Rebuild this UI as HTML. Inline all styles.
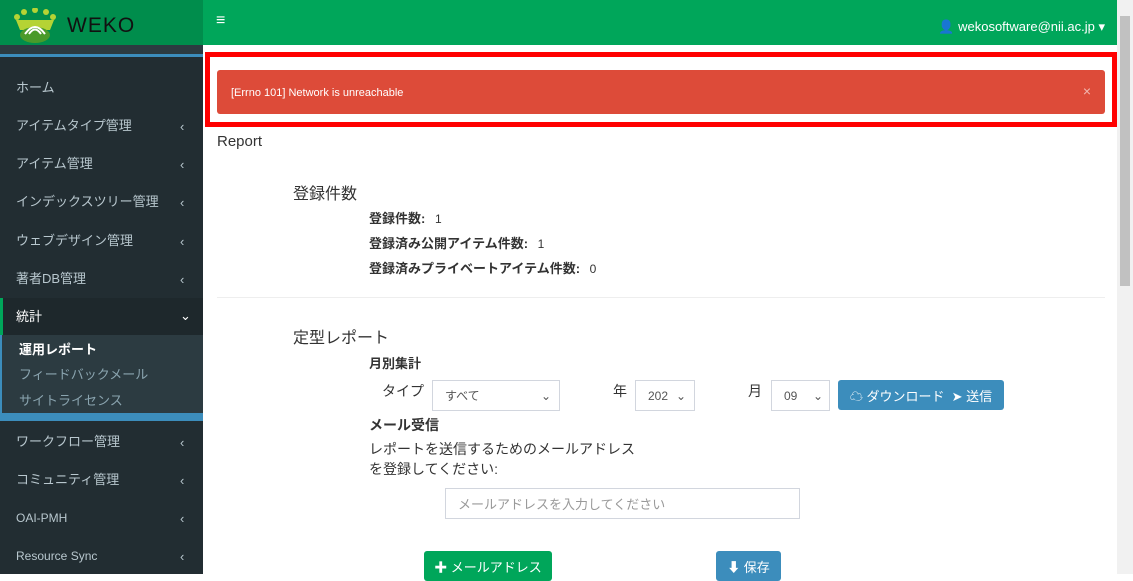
<!DOCTYPE html>
<html><head><meta charset="utf-8"><style>
*{box-sizing:border-box;margin:0;padding:0}
body{width:1133px;height:574px;overflow:hidden;font-family:"Liberation Sans","Noto Sans CJK JP",sans-serif;font-size:14px;color:#333;background:#fff;position:relative}
.abs{position:absolute}
#logo{left:0;top:0;width:203px;height:45px;background:#008d4c}
#hdr{left:203px;top:0;width:914px;height:45px;background:#00a65a;color:#fff}
#side{left:0;top:45px;width:203px;height:529px;background:#222d32}
.mi{position:absolute;left:16px;color:#b8c7ce;font-size:13px}
.ch{position:absolute;left:180px;color:#b8c7ce;font-size:13px;margin-top:4px}
.sub{position:absolute;left:19px;font-size:13px;color:#8aa4af}
.bold{font-weight:bold}
.inp{position:absolute;border:1px solid #d2d6de;background:#fff;font-size:12px;color:#555;padding-left:12px;display:flex;align-items:center}
.btn{position:absolute;background:#3c8dbc;color:#fff;border-radius:3px;font-size:13px;display:flex;align-items:center;justify-content:center}
</style></head><body>
<div id="logo" class="abs">
<svg class="abs" style="left:12px;top:8px" width="46" height="36" viewBox="0 0 46 36"><g fill="#b5d334"><circle cx="5" cy="9" r="3"/><circle cx="12" cy="4" r="3"/><circle cx="23" cy="2" r="3"/><circle cx="34" cy="4" r="3"/><circle cx="41" cy="9" r="3"/><path d="M4 12 L42 12 L38 22 L8 22Z"/></g><ellipse cx="23" cy="27" rx="15" ry="8" fill="#4a9a2a"/><path d="M13 26 Q23 12 33 26" stroke="#fff" stroke-width="2" fill="none"/><path d="M17 26 Q23 17 29 26" stroke="#fff" stroke-width="2" fill="none"/></svg>
<div class="abs" style="left:67px;top:14px;font-size:21px;color:#111;letter-spacing:1px">WEKO</div>
</div>
<div id="hdr" class="abs">
<div class="abs" style="left:13px;top:12px;font-size:16px">&#8801;</div>
<div class="abs" style="right:12px;top:19px;font-size:13px;white-space:nowrap">&#128100; wekosoftware@nii.ac.jp ▾</div>
</div>
<div id="side" class="abs">
<div class="abs" style="left:0;top:0;width:203px;height:10px;background:#2c3b41"></div>
<div class="abs" style="left:0;top:9px;width:203px;height:3px;background:#3c8dbc"></div>
<div class="mi" style="top:32px">ホーム</div>
<div class="mi" style="top:70px">アイテムタイプ管理</div><div class="ch" style="top:70px">‹</div>
<div class="mi" style="top:108px">アイテム管理</div><div class="ch" style="top:108px">‹</div>
<div class="mi" style="top:146px">インデックスツリー管理</div><div class="ch" style="top:146px">‹</div>
<div class="mi" style="top:185px">ウェブデザイン管理</div><div class="ch" style="top:185px">‹</div>
<div class="mi" style="top:223px">著者DB管理</div><div class="ch" style="top:223px">‹</div>
<div class="abs" style="left:0;top:253px;width:203px;height:37px;background:#1e282c;border-left:3px solid #00a65a"></div>
<div class="mi" style="top:261px;color:#fff">統計</div><div class="ch" style="top:259px;color:#fff">⌄</div>
<div class="abs" style="left:0;top:290px;width:203px;height:78px;background:#2c3b41;border-left:2px solid #3c8dbc"></div>
<div class="sub bold" style="top:294px;color:#fff">運用レポート</div>
<div class="sub" style="top:319px">フィードバックメール</div>
<div class="sub" style="top:345px">サイトライセンス</div>
<div class="abs" style="left:0;top:368px;width:203px;height:8px;background:#3c8dbc"></div>
<div class="mi" style="top:386px">ワークフロー管理</div><div class="ch" style="top:386px">‹</div>
<div class="mi" style="top:424px">コミュニティ管理</div><div class="ch" style="top:424px">‹</div>
<div class="mi" style="top:466px;font-size:12px">OAI-PMH</div><div class="ch" style="top:462px">‹</div>
<div class="mi" style="top:504px;font-size:12px">Resource Sync</div><div class="ch" style="top:500px">‹</div>
</div>
<div class="abs" style="left:1117px;top:0;width:16px;height:574px;background:#f1f1f1"></div>
<div class="abs" style="left:1120px;top:16px;width:10px;height:270px;background:#c1c1c1"></div>
<div class="abs" style="left:205px;top:52px;width:912px;height:75px;border:5px solid #f00"></div>
<div class="abs" style="left:217px;top:70px;width:888px;height:44px;background:#dd4b39;border-radius:3px;color:#fff;font-size:11px;padding:17px 0 0 14px">[Errno 101] Network is unreachable<span style="position:absolute;right:14px;top:13px;font-size:14px;opacity:.6">×</span></div>
<div class="abs" style="left:217px;top:133px;font-size:15px">Report</div>
<div class="abs" style="left:293px;top:180px;font-size:16px">登録件数</div>
<div class="abs bold" style="left:369px;top:208px;font-size:13px">登録件数: <span style="font-weight:normal;font-size:12px;margin-left:6px">1</span></div>
<div class="abs bold" style="left:369px;top:233px;font-size:13px">登録済み公開アイテム件数: <span style="font-weight:normal;font-size:12px;margin-left:6px">1</span></div>
<div class="abs bold" style="left:369px;top:258px;font-size:13px">登録済みプライベートアイテム件数: <span style="font-weight:normal;font-size:12px;margin-left:6px">0</span></div>
<div class="abs" style="left:217px;top:297px;width:888px;height:1px;background:#eee"></div>
<div class="abs" style="left:293px;top:324px;font-size:16px">定型レポート</div>
<div class="abs bold" style="left:369px;top:353px;font-size:13px">月別集計</div>
<div class="abs" style="left:382px;top:381px;font-size:14px">タイプ</div>
<div class="inp" style="left:432px;top:380px;width:128px;height:31px">すべて<span style="position:absolute;right:8px">⌄</span></div>
<div class="abs" style="left:613px;top:381px;font-size:14px">年</div>
<div class="inp" style="left:635px;top:380px;width:60px;height:31px">202<span style="position:absolute;right:8px">⌄</span></div>
<div class="abs" style="left:748px;top:381px;font-size:14px">月</div>
<div class="inp" style="left:771px;top:380px;width:59px;height:31px">09<span style="position:absolute;right:6px">⌄</span></div>
<div class="btn" style="left:838px;top:380px;width:166px;height:30px">☁ ダウンロード &nbsp;➤ 送信</div>
<div class="abs bold" style="left:369px;top:415px;font-size:14px">メール受信</div>
<div class="abs" style="left:369px;top:439px;font-size:14px;line-height:20px">レポートを送信するためのメールアドレス<br>を登録してください:</div>
<div class="inp" style="left:445px;top:488px;width:355px;height:31px;color:#999;font-size:13px">メールアドレスを入力してください</div>
<div class="btn" style="left:424px;top:551px;width:128px;height:30px;background:#00a65a">✚ メールアドレス</div>
<div class="btn" style="left:716px;top:551px;width:65px;height:30px">⬇ 保存</div>
</body></html>
